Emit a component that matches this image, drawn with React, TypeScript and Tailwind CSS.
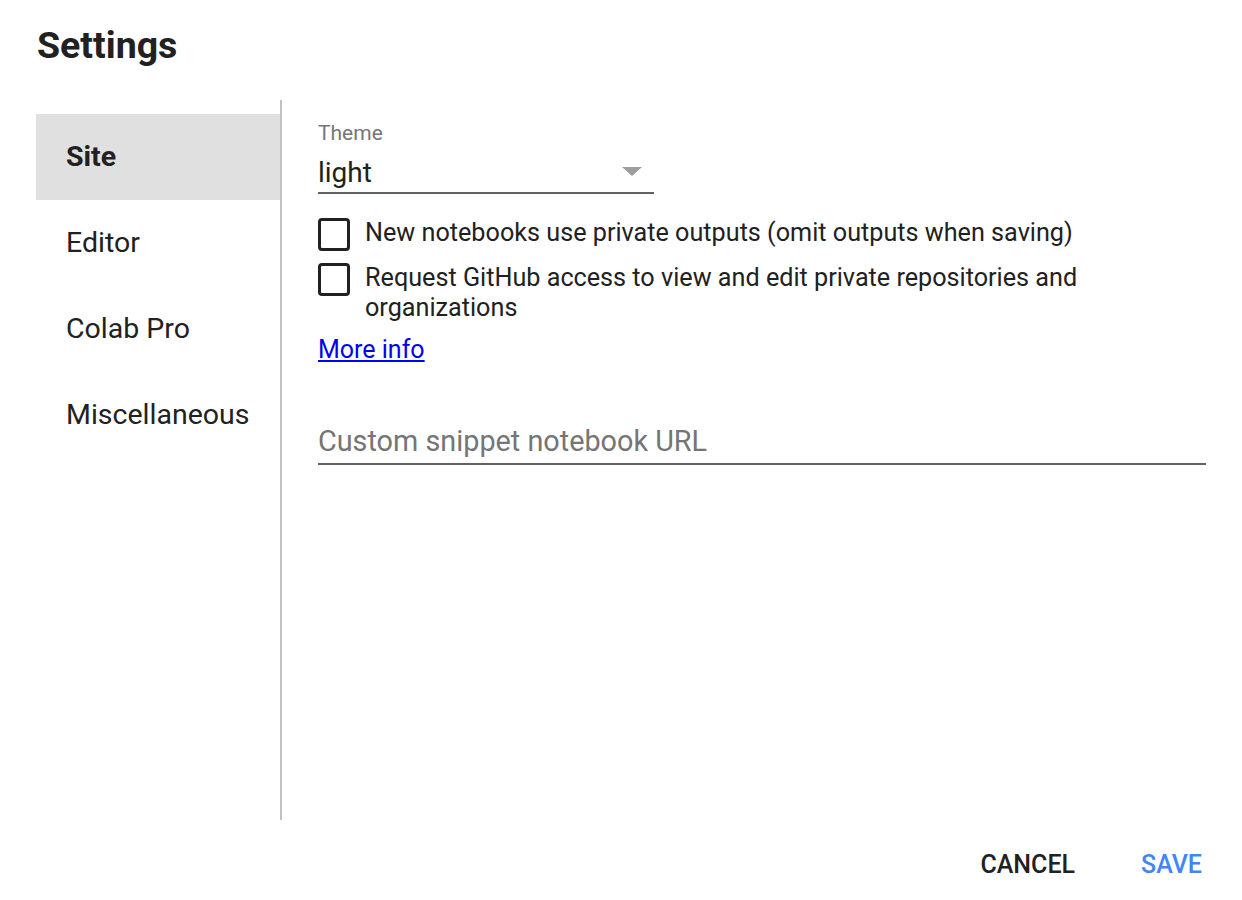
import React from 'react';

const navItems = ['Site', 'Editor', 'Colab Pro', 'Miscellaneous'];

function Checkbox({ label }: { label: React.ReactNode }) {
  return (
    <label className="flex items-start gap-[15px]">
      <span className="block h-[33px] w-[32px] shrink-0 rounded-[4px] border-[3px] border-[#212121]" />
      <span className="text-[25.2px] leading-[30px] text-[#212121]">{label}</span>
    </label>
  );
}

export default function App() {
  return (
    <div className="h-[900px] w-[1242px] bg-white font-['Roboto',sans-serif] text-[#212121]">
      <h1 className="pl-[37px] pt-[24px] text-[37.5px] font-bold leading-[42px]">Settings</h1>

      <div className="mt-[34px] flex h-[720px]">
        <nav className="ml-[36px] w-[246px] border-r-2 border-[#c2c2c2] pt-[14px]">
          {navItems.map((item, i) => (
            <div
              key={item}
              className={
                i === 0
                  ? 'flex h-[86px] items-center bg-[#e0e0e0] pl-[30px] text-[28.5px] font-bold'
                  : 'flex h-[86px] items-center pl-[30px] text-[28.5px]'
              }
            >
              {item}
            </div>
          ))}
        </nav>

        <div className="flex-1 pl-[36px] pr-[36px] pt-[20px]">
          <div className="w-[336px]">
            <div className="text-[21px] leading-[26px] text-[#757575]">Theme</div>
            <div className="flex h-[48px] items-end justify-between border-b-2 border-[#616161] pb-[2px]">
              <span className="text-[28px] leading-[34px]">light</span>
              <svg width="20" height="9" viewBox="0 0 20 9" className="mb-[14px] mr-[12px]">
                <path d="M0 0h20L10 9z" fill="#9e9e9e" />
              </svg>
            </div>
          </div>

          <div className="mt-[24px] flex flex-col gap-[12px]">
            <Checkbox label="New notebooks use private outputs (omit outputs when saving)" />
            <Checkbox
              label={
                <>
                  Request GitHub access to view and edit private repositories and
                  <br />
                  organizations
                </>
              }
            />
          </div>

          <a href="#" className="mt-[12px] inline-block text-[25px] leading-[30px] text-[#0000ee] underline">
            More info
          </a>

          <div className="mt-[58px] border-b-2 border-[#616161] pb-[4px] text-[28.8px] leading-[36px] text-[#757575]">
            Custom snippet notebook URL
          </div>
        </div>
      </div>

      <div className="flex justify-end gap-[66px] pr-[40px] pt-[30px]">
        <button className="text-[25px] font-medium leading-[30px] text-[#212121]">CANCEL</button>
        <button className="text-[25px] font-medium leading-[30px] text-[#4285f4]">SAVE</button>
      </div>
    </div>
  );
}
